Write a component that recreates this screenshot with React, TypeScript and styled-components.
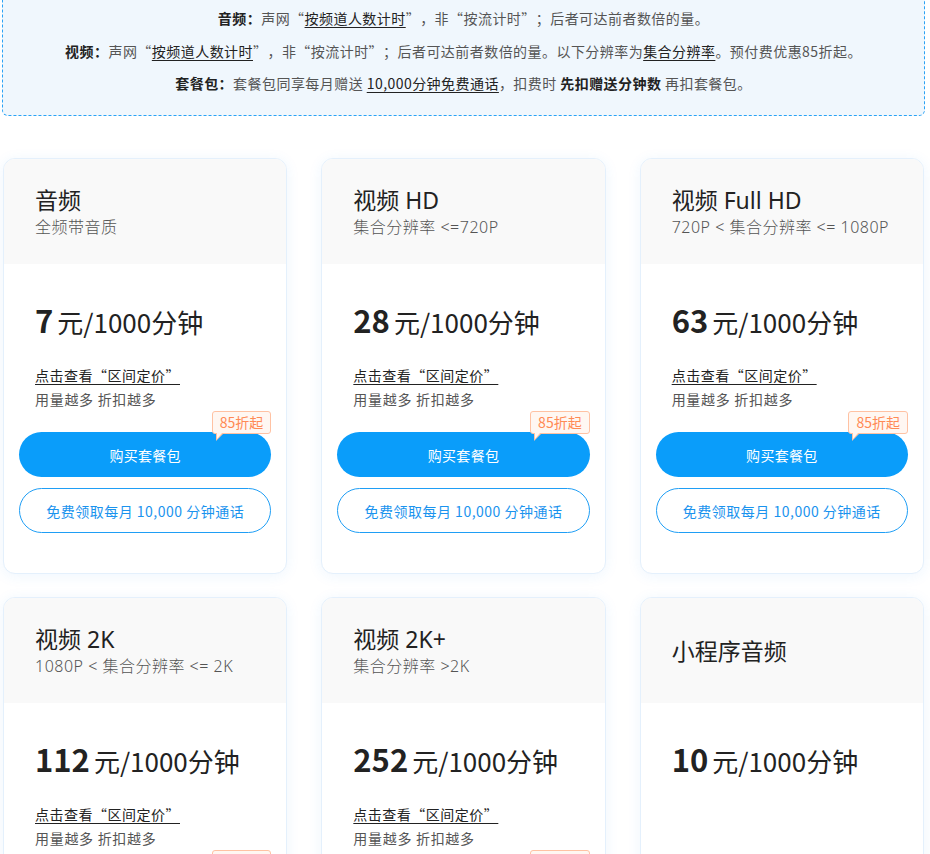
import React from "react";
import styled, { createGlobalStyle } from "styled-components";

const Global = createGlobalStyle`
  html, body { margin: 0; padding: 0; background: #fff; overflow: hidden; }
  body {
    font-family: "Noto Sans CJK SC", "Noto Sans", sans-serif;
    color: #333;
    text-spacing-trim: space-all;
  }
  * { box-sizing: border-box; }
`;

const Page = styled.div`
  padding: 0 5px 0 2px;
`;

const Notice = styled.div`
  margin-top: -10px;
  padding: 11px 16px 15.5px;
  border: 1px dashed #2aa3f5;
  border-radius: 6px;
  background: #f0f7fd;
  text-align: center;
`;

const NoticeLine = styled.p`
  margin: 0;
  font-size: 14px;
  line-height: 32.5px;
  letter-spacing: 0.45px;
  color: #555;
`;

const Label = styled.b`
  color: #222;
  font-weight: 700;
`;

const Em = styled.u<{ $bold?: boolean }>`
  color: #222;
  text-underline-offset: 3px;
  text-decoration: ${(p) => (p.$bold ? "none" : "underline")};
  font-weight: ${(p) => (p.$bold ? 700 : 400)};
`;

const Grid = styled.div`
  margin: 42px 1px 0 1px;
  display: grid;
  grid-template-columns: repeat(3, 1fr);
  column-gap: 34px;
  row-gap: 23px;
`;

const Card = styled.div`
  border: 1px solid #e4f0fc;
  border-radius: 12px;
  background: #fff;
  box-shadow: 0 2px 14px rgba(40, 140, 240, 0.08);
  overflow: hidden;
  display: flex;
  flex-direction: column;
`;

const Header = styled.div`
  height: 105px;
  background: #f9f9f9;
  padding: 0 31px;
  display: flex;
  flex-direction: column;
  justify-content: center;
`;

const Title = styled.div`
  font-family: "Noto Sans", "Noto Sans CJK SC", sans-serif;
  font-size: 23px;
  line-height: 30px;
  color: #222;
`;

const Sub = styled.div`
  font-family: "Noto Sans", "Noto Sans CJK SC", sans-serif;
  font-size: 16px;
  line-height: 24px;
  font-weight: 300;
  letter-spacing: 0.5px;
  color: #555;
  white-space: nowrap;
`;

const Body = styled.div`
  padding: 36px 15px 40px;
  display: flex;
  flex-direction: column;
`;

const Price = styled.div`
  padding-left: 16px;
  line-height: 40px;
  font-size: 26px;
  color: #222;
  white-space: nowrap;
`;

const Num = styled.span`
  font-size: 31px;
  font-weight: 700;
  margin-right: 4px;
`;

const Link = styled.a`
  margin: 23px 0 0 16px;
  align-self: flex-start;
  font-size: 14px;
  line-height: 20px;
  letter-spacing: 0.5px;
  color: #222;
  text-decoration: underline;
  text-underline-offset: 3px;
  padding-right: 1px;
`;

const Hint = styled.div`
  margin: 4px 0 0 16px;
  font-size: 14px;
  line-height: 20px;
  letter-spacing: 0.7px;
  color: #555;
`;

const BuyWrap = styled.div`
  position: relative;
  margin-top: 23px;
`;

const BuyButton = styled.button`
  width: 100%;
  height: 45px;
  border: none;
  border-radius: 23px;
  background: #0a9dfa;
  color: #fff;
  font-family: inherit;
  font-size: 14px;
  font-weight: 400;
  letter-spacing: 0.3px;
  cursor: pointer;
`;

const Badge = styled.span`
  position: absolute;
  right: 0;
  top: -21px;
  height: 23px;
  padding: 0 7px;
  border: 1px solid #ffc2a3;
  border-radius: 3px;
  background: #fff7f2;
  color: #ff8a55;
  font-size: 14px;
  line-height: 21px;
  white-space: nowrap;
  &::before {
    content: "";
    position: absolute;
    left: 3px;
    bottom: -8px;
    border-right: 7px solid transparent;
    border-top: 7px solid #ffc2a3;
  }
  &::after {
    content: "";
    position: absolute;
    left: 4px;
    bottom: -6px;
    border-right: 5px solid transparent;
    border-top: 6px solid #fff7f2;
  }
`;

const FreeButton = styled.button`
  margin-top: 11px;
  width: 100%;
  height: 45px;
  border: 1px solid #1f9ef5;
  border-radius: 23px;
  background: #fff;
  color: #1a93ee;
  font-family: inherit;
  font-size: 14px;
  letter-spacing: 0.5px;
  cursor: pointer;
`;

type Plan = {
  title: string;
  sub?: string;
  price: string;
  full: boolean;
};

const plans: Plan[] = [
  { title: "音频", sub: "全频带音质", price: "7", full: true },
  { title: "视频 HD", sub: "集合分辨率 <=720P", price: "28", full: true },
  { title: "视频 Full HD", sub: "720P < 集合分辨率 <= 1080P", price: "63", full: true },
  { title: "视频 2K", sub: "1080P < 集合分辨率 <= 2K", price: "112", full: true },
  { title: "视频 2K+", sub: "集合分辨率 >2K", price: "252", full: true },
  { title: "小程序音频", price: "10", full: false },
];

export default function App() {
  return (
    <Page>
      <Global />
      <Notice>
        <NoticeLine>
          <Label>音频：</Label>声网“<Em>按频道人数计时</Em>”，非“按流计时”；后者可达前者数倍的量。
        </NoticeLine>
        <NoticeLine>
          <Label>视频：</Label>声网“<Em>按频道人数计时</Em>”，非“按流计时”；后者可达前者数倍的量。以下分辨率为<Em>集合分辨率</Em>。预付费优惠85折起。
        </NoticeLine>
        <NoticeLine>
          <Label>套餐包：</Label>套餐包同享每月赠送 <Em>10,000分钟免费通话</Em>，扣费时 <Em $bold>先扣赠送分钟数</Em> 再扣套餐包。
        </NoticeLine>
      </Notice>
      <Grid>
        {plans.map((p) => (
          <Card key={p.title}>
            <Header>
              <Title>{p.title}</Title>
              {p.sub && <Sub>{p.sub}</Sub>}
            </Header>
            <Body>
              <Price>
                <Num>{p.price}</Num>元/1000分钟
              </Price>
              {p.full && (
                <>
                  <Link>点击查看“区间定价”</Link>
                  <Hint>用量越多 折扣越多</Hint>
                  <BuyWrap>
                    <BuyButton>购买套餐包</BuyButton>
                    <Badge>85折起</Badge>
                  </BuyWrap>
                  <FreeButton>免费领取每月 10,000 分钟通话</FreeButton>
                </>
              )}
            </Body>
          </Card>
        ))}
      </Grid>
    </Page>
  );
}
